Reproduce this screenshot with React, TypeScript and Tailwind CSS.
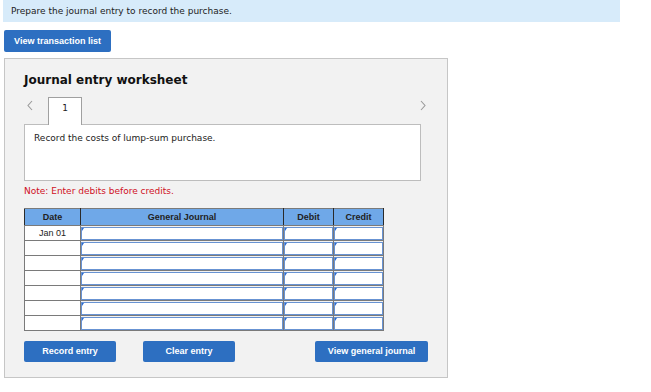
import React from "react";

const verdana = "font-['DejaVu_Sans',Verdana,sans-serif]";
const arial = "font-['Liberation_Sans',Arial,sans-serif]";

const Btn = ({ label, size }: { label: string; size: string }) => (
  <button
    className={`${arial} ${size} block rounded-[2px] bg-[#2d6fc1] text-[9px] font-bold leading-none text-white`}
  >
    {label}
  </button>
);

const InputCell = () => (
  <td className="border border-[#7a7a7a] p-0">
    <div className="relative h-[13px] border border-[#6893d3] bg-white">
      <span className="absolute left-0 top-0 h-0 w-0 border-t-[3px] border-r-[2px] border-t-[#2a6ad0] border-r-transparent" />
    </div>
  </td>
);

const Chevron = ({ dir }: { dir: "left" | "right" }) => (
  <svg width="6" height="11" viewBox="0 0 6 11" className="mb-[13px] block">
    <polyline
      points={dir === "left" ? "5,1 1,5.5 5,10" : "1,1 5,5.5 1,10"}
      fill="none"
      stroke="#9a9a9a"
      strokeWidth="1.1"
    />
  </svg>
);

export default function App() {
  const rows = ["Jan 01", "", "", "", "", "", ""];

  return (
    <div className="h-[392px] w-[651px] overflow-hidden bg-white">
      <div
        className={`${verdana} ml-[3px] h-[22px] w-[617px] bg-[#d7ebfa] pl-[8px] text-[9px] leading-[22px] text-[#222]`}
      >
        Prepare the journal entry to record the purchase.
      </div>

      <div className="ml-[4px] mt-[8px] flex">
        <Btn label="View transaction list" size="w-[107px] h-[22px]" />
      </div>

      <section className="ml-[4px] mt-[6px] h-[320px] w-[444px] border border-[#c6c6c6] bg-[#f2f2f2] pl-[19px] pt-[14px]">
        <h2 className={`${verdana} text-[12px] font-bold leading-[15px] text-[#111]`}>
          Journal entry worksheet
        </h2>

        <div className="mt-[9px] flex w-[402px] items-end justify-between pl-[3px]">
          <div className="flex items-end">
            <Chevron dir="left" />
            <div
              className={`${verdana} relative z-10 -mb-px ml-[15px] flex h-[28px] w-[34px] justify-center border border-b-0 border-[#a0a0a0] bg-white pt-[5px] text-[9px] leading-[11px] text-[#222]`}
            >
              1
            </div>
          </div>
          <Chevron dir="right" />
        </div>

        <div
          className={`${verdana} h-[57px] w-[397px] border border-[#bdbdbd] bg-white pl-[9px] pt-[8px] text-[9px] leading-[11px] text-[#222]`}
        >
          Record the costs of lump-sum purchase.
        </div>

        <p className={`${verdana} mt-[5px] text-[9px] leading-[11px] text-[#d0101e]`}>
          Note: Enter debits before credits.
        </p>

        <table className={`${arial} mt-[11px] w-[359px] table-fixed border-collapse text-[9px] text-[#222]`}>
          <colgroup>
            <col className="w-[56px]" />
            <col className="w-[203px]" />
            <col className="w-[50px]" />
            <col className="w-[50px]" />
          </colgroup>
          <thead>
            <tr className="h-[17px] bg-[#6fa8e8]">
              {["Date", "General Journal", "Debit", "Credit"].map((h) => (
                <th
                  key={h}
                  className="border border-x-[#2a2a2a] border-y-[#7a7a7a] p-0 text-center font-bold leading-[15px]"
                >
                  {h}
                </th>
              ))}
            </tr>
          </thead>
          <tbody>
            {rows.map((d, i) => (
              <tr key={i} className="h-[15px]">
                <td className="border border-[#7a7a7a] bg-white p-0 text-center leading-[13px]">{d}</td>
                <InputCell />
                <InputCell />
                <InputCell />
              </tr>
            ))}
          </tbody>
        </table>

        <div className="mt-[10px] flex w-[404px] items-start">
          <Btn label="Record entry" size="w-[92px] h-[21px]" />
          <div className="ml-[27px] flex">
            <Btn label="Clear entry" size="w-[92px] h-[21px]" />
          </div>
          <div className="ml-auto flex">
            <Btn label="View general journal" size="w-[113px] h-[21px]" />
          </div>
        </div>
      </section>
    </div>
  );
}
